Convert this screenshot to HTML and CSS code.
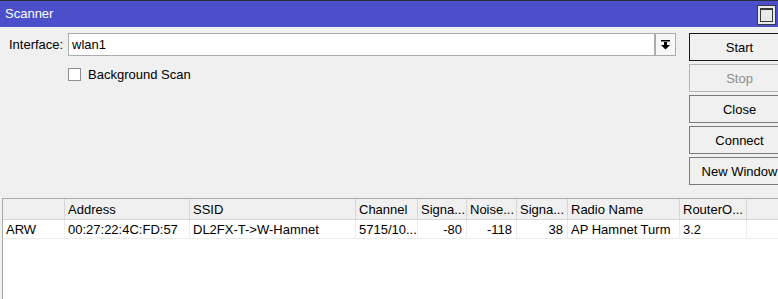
FILE: index.html
```html
<!DOCTYPE html>
<html>
<head>
<meta charset="utf-8">
<link rel="stylesheet" href="styles.css">
</head>
<body>
<div class="window">
  <div class="titlebar">
    <span class="title">Scanner</span>
    <span class="maxbtn">
      <svg width="19" height="20" viewBox="0 0 19 20">
        <rect x="0.5" y="0.5" width="18" height="19" fill="#e9e9e9" stroke="#3a3a3a"/>
        <rect x="3.5" y="3.5" width="12" height="13" fill="#e9e9e9" stroke="#3a3a3a"/>
        <rect x="3" y="3" width="13" height="2" fill="#3a3a3a"/>
      </svg>
    </span>
  </div>
  <div class="main">
    <div class="form">
      <div class="row">
        <span class="label">Interface:</span>
        <div class="combo">
          <div class="input">wlan1</div>
          <div class="arrow">
            <svg width="9" height="10" viewBox="0 0 9 10">
              <rect x="0" y="0" width="9" height="1.5" fill="#000"/>
              <rect x="3" y="2" width="3" height="3" fill="#000"/>
              <polygon points="0,5 9,5 4.5,9.5" fill="#000"/>
            </svg>
          </div>
        </div>
      </div>
      <div class="row check-row">
        <span class="checkbox"></span>
        <span class="check-label">Background Scan</span>
      </div>
    </div>
    <div class="buttons">
      <div class="btn default">Start</div>
      <div class="btn disabled">Stop</div>
      <div class="btn">Close</div>
      <div class="btn">Connect</div>
      <div class="btn">New Window</div>
    </div>
  </div>
  <div class="table">
    <div class="tr head">
      <div class="td"></div>
      <div class="td">Address</div>
      <div class="td">SSID</div>
      <div class="td">Channel</div>
      <div class="td">Signa...</div>
      <div class="td">Noise...</div>
      <div class="td">Signa...</div>
      <div class="td">Radio Name</div>
      <div class="td">RouterO...</div>
      <div class="td last"></div>
    </div>
    <div class="tr body">
      <div class="td">ARW</div>
      <div class="td">00:27:22:4C:FD:57</div>
      <div class="td">DL2FX-T-&gt;W-Hamnet</div>
      <div class="td">5715/10...</div>
      <div class="td num">-80</div>
      <div class="td num">-118</div>
      <div class="td num">38</div>
      <div class="td">AP Hamnet Turm</div>
      <div class="td">3.2</div>
      <div class="td last"></div>
    </div>
  </div>
</div>
</body>
</html>
```
FILE: styles.css
```css
html, body {
  margin: 0;
  padding: 0;
}
body {
  width: 778px;
  height: 299px;
  overflow: hidden;
  font-family: "Liberation Sans", Arial, sans-serif;
  font-size: 13px;
  color: #000;
  background: #f0f0f0;
}
.window {
  width: 778px;
  height: 299px;
  display: flex;
  flex-direction: column;
  overflow: hidden;
  background: #f0f0f0;
}
.titlebar {
  height: 26px;
  flex: none;
  border-top: 1px solid #2a2a3a;
  background: #4b4fc9;
  color: #fff;
  display: flex;
  align-items: center;
  justify-content: space-between;
  padding-left: 5px;
  padding-right: 2px;
}
.title {
  font-size: 13px;
  margin-top: -1px;
}
.maxbtn {
  display: flex;
  margin-top: 1px;
}
.main {
  display: flex;
  padding-top: 6px;
  flex: none;
}
.form {
  width: 676px;
  padding-left: 9px;
  box-sizing: border-box;
  flex: none;
}
.row {
  display: flex;
  align-items: center;
}
.label {
  width: 59px;
}
.combo {
  display: flex;
  height: 23px;
}
.input {
  width: 582px;
  height: 21px;
  border: 1px solid #acacac;
  background: #fff;
  line-height: 21px;
  padding-left: 3px;
}
.arrow {
  width: 19px;
  height: 21px;
  border: 1px solid #acacac;
  background: #f7f7f7;
  display: flex;
  align-items: center;
  justify-content: center;
}
.check-row {
  margin-top: 11px;
  padding-left: 59px;
}
.checkbox {
  width: 13px;
  height: 13px;
  border: 1px solid #8f8f8f;
  background: #fff;
  box-sizing: border-box;
  margin-right: 7px;
  margin-top: -1px;
}
.check-label {
  line-height: 15px;
}
.buttons {
  margin-left: 13px;
  display: flex;
  flex-direction: column;
  gap: 3px;
  flex: none;
}
.btn {
  width: 101px;
  height: 28px;
  box-sizing: border-box;
  border: 1px solid #7a7a7a;
  background: #f0f0f0;
  display: flex;
  align-items: center;
  justify-content: center;
  white-space: nowrap;
}
.btn.default {
  border-color: #1a1a1a;
}
.btn.disabled {
  color: #8d8d8d;
  border-color: #b5b5b5;
}
.table {
  margin-top: 13px;
  margin-left: 2px;
  flex: 1;
  border-top: 1px solid #a9a9a9;
  border-left: 1px solid #a9a9a9;
  background: #fff;
}
.tr {
  display: grid;
  grid-template-columns: 62px 125px 166px 62px 49px 50px 51px 112px 67px 40px;
}
.tr.head {
  height: 20px;
  background: #f0f0f0;
  border-bottom: 1px solid #d6d6d6;
}
.tr.body {
  height: 18px;
  border-bottom: 1px solid #ececec;
}
.td {
  border-right: 1px solid #d6d6d6;
  padding: 0 3px;
  white-space: nowrap;
  overflow: hidden;
  display: flex;
  align-items: center;
}
.body .td {
  border-right-color: #ececec;
}
.td.num {
  justify-content: flex-end;
  padding-right: 4px;
}
.td.last {
  border-right: none;
}
```
